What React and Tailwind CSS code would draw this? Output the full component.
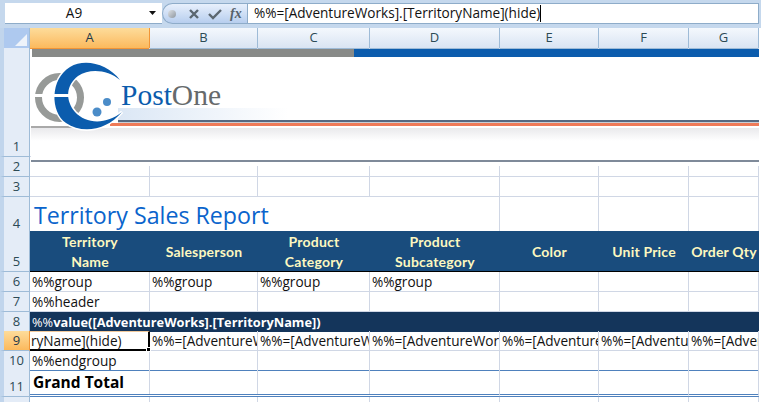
import React from 'react';

const COLS = 'grid grid-cols-[30px_120px_108px_112px_130px_99px_90px_70px_2px]';
const LETTERS = ['A', 'B', 'C', 'D', 'E', 'F', 'G'];

const RowHead = ({ n, active }) => (
  <div className={`flex items-end justify-center border-l-4 border-l-[#c1d5ec] border-r border-b border-[#9ebbd7] text-[13px] leading-[19px] ${active ? 'bg-gradient-to-b from-[#fddc9a] to-[#fbb95c] border-r-[#f29536] text-[#1f3a4a]' : 'bg-[#e4ecf7] text-[#2c4a55]'}`}>
    {n}
  </div>
);

const Cell = ({ children, className = '' }) => (
  <div className={`min-w-0 overflow-hidden whitespace-nowrap border-r border-b border-[#d0d7e5] pl-[2px] leading-[19px] ${className}`}>
    {children}
  </div>
);

const Row = ({ n, h, cells = [], active, className = '', cellClass = '' }) => (
  <div className={`${COLS} ${h} ${className}`}>
    <RowHead n={n} active={active} />
    {LETTERS.map((l, i) => <Cell key={l} className={cellClass}>{cells[i]}</Cell>)}
  </div>
);

const FormulaBar = () => (
  <div className="flex h-[28px] shrink-0 items-start bg-[#c5d8ed] pl-[5px] pr-[2px] pt-[3px]">
    <div className="flex h-[21px] w-[157px] shrink-0 items-center border-b border-[#8eacc9] bg-white">
      <span className="flex-1 pr-[6px] text-center">A9</span>
      <svg width="8" height="5" className="mr-[5px]"><path d="M0 0h7L3.5 4z" fill="#111" /></svg>
    </div>
    <div className="flex h-[21px] w-[85px] shrink-0 items-center gap-[8px] rounded-l-[11px] border border-[#8eacc9] border-r-0 bg-gradient-to-b from-[#e8f0fc] to-[#b7ceee] pl-[5px]">
      <div className="h-[8px] w-[8px] rounded-full bg-gradient-to-br from-[#dfe3e8] to-[#8f979f]" />
      <svg width="12" height="12" viewBox="0 0 12 12" className="ml-[4px]"><path d="M2 2l8 8M10 2l-8 8" stroke="#5b6770" strokeWidth="2.4" /></svg>
      <svg width="14" height="12" viewBox="0 0 14 12"><path d="M1 6l4 4 8-8" fill="none" stroke="#5b6770" strokeWidth="2.4" /></svg>
      <span className="font-['Liberation_Serif',serif] text-[14px] font-bold italic leading-none text-[#56616b]">fx</span>
    </div>
    <div className="flex h-[21px] flex-1 items-center border border-[#8eacc9] bg-white pl-[6px]">
      <span>%%=[AdventureWorks].[TerritoryName](hide)</span>
      <span className="h-[17px] w-px bg-black" />
    </div>
  </div>
);

const ColumnHeaders = () => (
  <div className={`${COLS} h-[20px] shrink-0`}>
    <div className="flex items-end justify-end border-l-4 border-l-[#c1d5ec] border-r border-b border-[#9ebbd7] bg-[#aec9ef] p-[2px]">
      <svg width="12" height="12"><path d="M12 0v12H0z" fill="#eef3fa" /></svg>
    </div>
    {LETTERS.map((l, i) => (
      <div key={l} className={`flex items-center justify-center border-r border-b text-[13px] ${i === 0 ? 'border-[#f29536] bg-gradient-to-b from-[#fddc9a] to-[#fbb95c] text-[#1f3a4a]' : 'border-[#9ebbd7] bg-gradient-to-b from-[#f4f8fd] to-[#d9e4f3] text-[#2c4a55]'}`}>{l}</div>
    ))}
  </div>
);

// the banner image sits over rows 1 and 2, like a picture floating on the sheet
const Banner = () => (
  <svg className="absolute left-[31px] top-[1px] h-[117px] w-[728px]" viewBox="31 49 728 117">
    <defs>
      <linearGradient id="pale" x1="0" x2="1"><stop offset="0" stopColor="#dbe7f5" /><stop offset="1" stopColor="#ffffff" /></linearGradient>
      <linearGradient id="fade" x1="0" x2="0" y1="0" y2="1"><stop offset="0" stopColor="#e9e9ec" /><stop offset="1" stopColor="#ffffff" /></linearGradient>
    </defs>
    <rect x="31" y="49" width="728" height="117" fill="#fff" />
    <rect x="32" y="49" width="322" height="8" fill="#888a88" />
    <rect x="354" y="49" width="405" height="8" fill="#0b5cad" />
    <rect x="118" y="108" width="170" height="12" fill="url(#pale)" />
    <rect x="31" y="128" width="728" height="13" fill="url(#fade)" />
    <rect x="31" y="126" width="50" height="2" fill="#a9a9a9" />
    <rect x="118" y="120" width="641" height="2" fill="#566880" />
    <rect x="118" y="122" width="641" height="1" fill="#c9ced6" />
    <rect x="110" y="123" width="649" height="3" fill="#ee7a58" />
    <rect x="31" y="160" width="728" height="2" fill="#7f8a99" />
    <circle cx="59.5" cy="97.5" r="21" fill="none" stroke="#979a98" strokeWidth="7" />
    <rect x="34" y="94" width="22" height="3" fill="#fff" />
    <path d="M120 80C108 64 85 58 70 67C50 79 50 112 66 123C82 134 106 131 122 112C106 125 86 124 75 112C65 100 66 85 78 76C90 68 108 70 120 80Z" fill="#0b5cad" stroke="#fff" strokeWidth="3" paintOrder="stroke" />
    <rect x="54" y="94" width="20" height="3" fill="#fff" />
    <circle cx="97" cy="112" r="4.5" fill="#4b8cc8" />
    <circle cx="107" cy="102" r="4" fill="#4b8cc8" />
    <text x="121" y="105" fontFamily="'Liberation Serif', serif" fontSize="29.5" fill="#0b5cad">Post<tspan fill="#666a6c">One</tspan></text>
  </svg>
);

const HEADERS = [['Territory', 'Name'], ['Salesperson'], ['Product', 'Category'], ['Product', 'Subcategory'], ['Color'], ['Unit Price'], ['Order Qty']];

const HeaderRow = () => (
  <div className={`${COLS} h-[41px]`}>
    <RowHead n={5} />
    {HEADERS.map((lines) => (
      <div key={lines.join()} className="flex flex-col items-center justify-center overflow-hidden whitespace-nowrap border-b border-black bg-[#194c7d] pt-[2px] font-['Lato',sans-serif] text-[14px] font-bold leading-[20px] tracking-[0.2px] text-[#fdf8c0]">
        {lines.map((t) => <span key={t}>{t}</span>)}
      </div>
    ))}
  </div>
);

const ValueRow = () => (
  <div className={`${COLS} h-[19px]`}>
    <RowHead n={8} />
    <div className="col-span-7 whitespace-nowrap bg-[#14355b] pl-[2px] text-[12.8px] leading-[20px] text-white">
      %%<span className="font-bold">value([AdventureWorks].[TerritoryName])</span>
    </div>
  </div>
);

const SelectedRow = () => {
  const refs = ['%%=[AdventureWorks]', '%%=[AdventureWorks]', '%%=[AdventureWorks]', '%%=[AdventureWorks]', '%%=[AdventureWorks]', '%%=[AdventureWorks]'];
  return (
    <div className={`${COLS} h-[20px]`}>
      <RowHead n={9} active />
      <div className="relative border-t border-t-[#f1c99b] border-r-2 border-r-black border-b-2 border-b-black pl-[1px] leading-[17px]">
        ryName](hide)
        <div className="absolute -bottom-[3px] -right-[3px] h-[5px] w-[5px] border border-white bg-black" />
      </div>
      {refs.map((t, i) => <Cell key={i}>{t}</Cell>)}
    </div>
  );
};

export default function App() {
  return (
    <div className="flex h-[402px] w-[761px] flex-col overflow-hidden bg-white font-['Open_Sans',sans-serif] text-[13.6px] text-[#111]">
      <FormulaBar />
      <ColumnHeaders />
      <div className="relative flex-1 overflow-hidden">
        <Row n={1} h="h-[109px]" />
        <Row n={2} h="h-[20px]" />
        <Row n={3} h="h-[20px]" />
        <div className={`${COLS} h-[34px]`}>
          <RowHead n={4} />
          <div className="col-span-3 whitespace-nowrap border-b border-[#d0d7e5] pl-[4px] text-[23.2px] leading-[36px] text-[#0a64cc]">Territory Sales Report</div>
          {LETTERS.slice(3).map((l) => <Cell key={l} />)}
        </div>
        <HeaderRow />
        <Row n={6} h="h-[20px]" cells={['%%group', '%%group', '%%group', '%%group']} />
        <Row n={7} h="h-[20px]" cells={['%%header']} />
        <ValueRow />
        <SelectedRow />
        <Row n={10} h="h-[19px]" cells={['%%endgroup']} cellClass="border-b-[#4f81bd]" />
        <div className={`${COLS} h-[27px]`}>
          <RowHead n={11} />
          <div className="col-span-3 grid grid-cols-[120px_108px_112px] border-b-[3px] border-double border-[#4f81bd]">
            <div className="whitespace-nowrap border-r border-[#d0d7e5] pl-[3px] text-[15.5px] font-bold leading-[24px] text-black">Grand Total</div>
            <div className="border-r border-[#d0d7e5]" />
            <div className="border-r border-[#d0d7e5]" />
          </div>
          {LETTERS.slice(3).map((l) => <Cell key={l} className="border-b-[3px] border-b-[#4f81bd] border-double" />)}
        </div>
        <Row n={12} h="h-[20px]" />
        <Banner />
      </div>
    </div>
  );
}
